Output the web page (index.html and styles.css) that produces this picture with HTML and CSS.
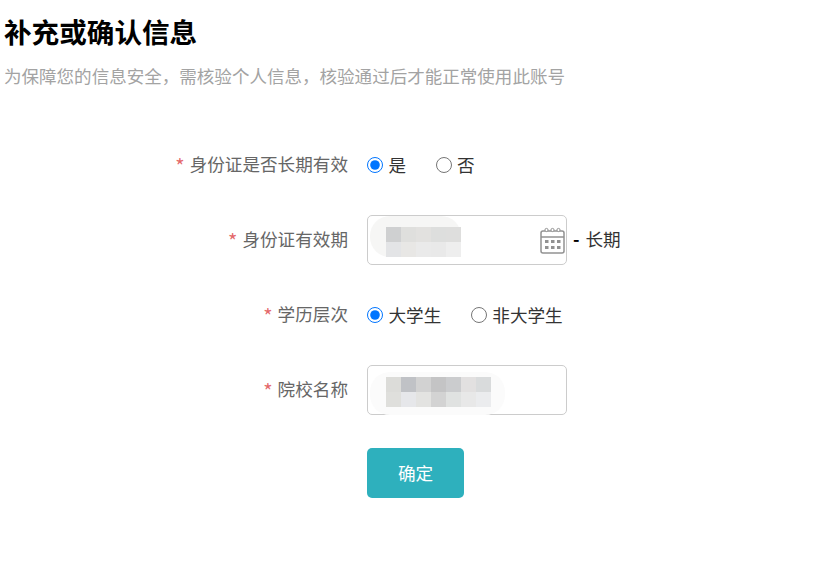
FILE: index.html
```html
<!DOCTYPE html>
<html lang="zh-CN">
<head>
    <meta charset="UTF-8">
    <title>补充或确认信息</title>
    <link rel="stylesheet" href="styles.css">
</head>
<body>
    <h1 class="title">补充或确认信息</h1>
    <p class="subtitle">为保障您的信息安全，需核验个人信息，核验通过后才能正常使用此账号</p>
    <form class="info-form">
        <div class="row">
            <label class="row-label"><span class="star">*</span>身份证是否长期有效</label>
            <div class="row-field">
                <label class="radio"><input type="radio" name="longterm" checked><span>是</span></label>
                <label class="radio"><input type="radio" name="longterm"><span>否</span></label>
            </div>
        </div>
        <div class="row">
            <label class="row-label"><span class="star">*</span>身份证有效期</label>
            <div class="row-field">
                <div class="text-box">
                    <div class="smudge smudge-date"></div>
                    <div class="mosaic">
                        <i style="background:#cfd0d1"></i><i style="background:#dfdfdd"></i><i style="background:#e2e1df"></i><i style="background:#dddedd"></i><i style="background:#dededd"></i>
                        <i style="background:#e3e4e6"></i><i style="background:#e8e7e5"></i><i style="background:#eaeaea"></i><i style="background:#e9e9e9"></i><i style="background:#eeeeee"></i>
                    </div>
                    <svg class="calendar" width="26" height="27" viewBox="0 0 26 27" fill="none" stroke="#929292">
                        <rect x="1" y="4" width="23" height="22" rx="2" stroke-width="1.5"/>
                        <path d="M1 10h23" stroke-width="1.5"/>
                        <circle cx="6.5" cy="3" r="1.6" fill="#fff" stroke-width="1"/>
                        <circle cx="12.5" cy="3" r="1.6" fill="#fff" stroke-width="1"/>
                        <circle cx="18.5" cy="3" r="1.6" fill="#fff" stroke-width="1"/>
                        <g fill="#929292" stroke="none">
                            <rect x="5" y="13" width="3.5" height="3"/><rect x="11" y="13" width="3.5" height="3"/><rect x="17" y="13" width="3.5" height="3"/>
                            <rect x="5" y="19" width="3.5" height="3"/><rect x="11" y="19" width="3.5" height="3"/><rect x="17" y="19" width="3.5" height="3"/>
                        </g>
                    </svg>
                </div>
                <span class="long-term"><b>-</b>长期</span>
            </div>
        </div>
        <div class="row">
            <label class="row-label"><span class="star">*</span>学历层次</label>
            <div class="row-field">
                <label class="radio"><input type="radio" name="level" checked><span>大学生</span></label>
                <label class="radio"><input type="radio" name="level"><span>非大学生</span></label>
            </div>
        </div>
        <div class="row">
            <label class="row-label"><span class="star">*</span>院校名称</label>
            <div class="row-field">
                <div class="text-box">
                    <div class="smudge smudge-school"></div>
                    <div class="mosaic mosaic-wide">
                        <i style="background:#dcdcd9"></i><i style="background:#c0c2c6"></i><i style="background:#d2d2d2"></i><i style="background:#c4c4c5"></i><i style="background:#cbccce"></i><i style="background:#e2e0e0"></i><i style="background:#d9dbdc"></i>
                        <i style="background:#dfdfdc"></i><i style="background:#e6e7ea"></i><i style="background:#e3e3e1"></i><i style="background:#d3d3d3"></i><i style="background:#e0e2e1"></i><i style="background:#e8e8e8"></i><i style="background:#ebecee"></i>
                    </div>
                </div>
            </div>
        </div>
        <div class="row row-submit">
            <div class="row-label"></div>
            <div class="row-field">
                <button type="button" class="submit">确定</button>
            </div>
        </div>
    </form>
</body>
</html>
```

FILE: styles.css
```css
body {
    margin: 0;
    padding: 15px 0 0 4px;
    font-family: "Noto Sans CJK SC", "Liberation Sans", sans-serif;
    font-size: 17.6px;
    color: #333;
    background-color: #fff;
}
.title {
    margin: 0;
    font-size: 27.6px;
    line-height: 32px;
    font-weight: bold;
    color: #000;
}
.subtitle {
    margin: 13px 0 0;
    font-size: 17.55px;
    line-height: 32px;
    color: #a3a3a3;
}
.info-form {
    margin-top: 48px;
    display: flex;
    flex-direction: column;
    gap: 25px;
}
.row {
    display: flex;
    align-items: center;
    gap: 19px;
    height: 50px;
}
.row-submit {
    margin-top: 8px;
}
.row-label {
    width: 344px;
    padding-bottom: 3px;
    text-align: right;
    color: #666;
}
.star {
    color: #e4696b;
    margin-right: 5px;
    font-size: 20px;
    line-height: 1;
    vertical-align: -3px;
}
.row-field {
    display: flex;
    align-items: center;
}
.radio {
    display: flex;
    align-items: center;
    margin-right: 29.5px;
    color: #333;
}
.radio input {
    width: 16px;
    height: 16px;
    margin: 0 5.5px 0 0;
}
.radio span {
    padding-bottom: 2px;
}
.text-box {
    position: relative;
    width: 200px;
    height: 50px;
    box-sizing: border-box;
    border: 1px solid #ccc;
    border-radius: 5px;
    background-color: #fff;
}
.smudge {
    position: absolute;
    left: 2px;
    border-radius: 20px;
    background-color: #f6f6f5;
}
.smudge-date {
    top: 0;
    width: 91px;
    height: 41px;
}
.smudge-school {
    top: 6px;
    width: 135px;
    height: 43px;
    background-color: #fbfbfb;
}
.mosaic {
    position: absolute;
    left: 18px;
    top: 11px;
    display: grid;
    grid-template-columns: repeat(5, 15px);
    grid-auto-rows: 15px;
}
.mosaic-wide {
    grid-template-columns: repeat(7, 15px);
}
.calendar {
    position: absolute;
    right: 0;
    top: 11px;
}
.long-term {
    margin-left: 6px;
    padding-bottom: 3px;
    color: #333;
}
.long-term b {
    margin-right: 6px;
    color: #000;
}
.submit {
    width: 97px;
    height: 50px;
    padding: 0 0 1px;
    border: none;
    border-radius: 5px;
    background-color: #2eb0bd;
    color: #fff;
    font-family: inherit;
    font-size: 17.6px;
    cursor: pointer;
}
```
